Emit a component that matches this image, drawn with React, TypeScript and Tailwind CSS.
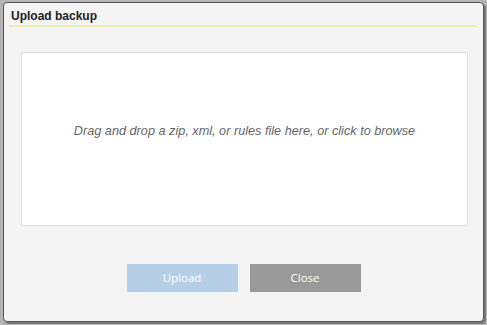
export default function App() {
  return (
    <div className="w-[487px] h-[325px] bg-[#b4b4b4] pl-[3px] pt-[2px] overflow-hidden">
      <div
        className="w-[481px] h-[320px] bg-[#f4f4f4] border border-[#555] rounded-[4px] shadow-[2px_2px_0_#7a7a7a] flex flex-col"
        style={{ fontFamily: '"Liberation Sans", Arial, sans-serif' }}
      >
        <div className="h-[22px] pl-[7px] flex items-end pb-[3px]">
          <span className="text-[12px] font-bold text-[#222] leading-none">Upload backup</span>
        </div>
        <div className="ml-[5px] mr-[6px] h-[2px] bg-[#eaeeaa]" />
        <div className="mt-[25px] ml-[17px] mr-[15px] h-[174px] bg-white border border-[#dcdcdc] rounded-[2px] flex items-center justify-center pb-[14px]">
          <span className="text-[12.7px] italic text-[#666]">
            Drag and drop a zip, xml, or rules file here, or click to browse
          </span>
        </div>
        <div className="mt-[38px] flex justify-center gap-[12px]">
          <button
            className="w-[111px] h-[28px] bg-[#b4cfe6] text-white text-[11.5px]"
            style={{ fontFamily: '"Open Sans", sans-serif' }}
          >
            Upload
          </button>
          <button
            className="w-[111px] h-[28px] bg-[#999] text-white text-[11.5px]"
            style={{ fontFamily: '"Open Sans", sans-serif' }}
          >
            Close
          </button>
        </div>
      </div>
    </div>
  );
}
